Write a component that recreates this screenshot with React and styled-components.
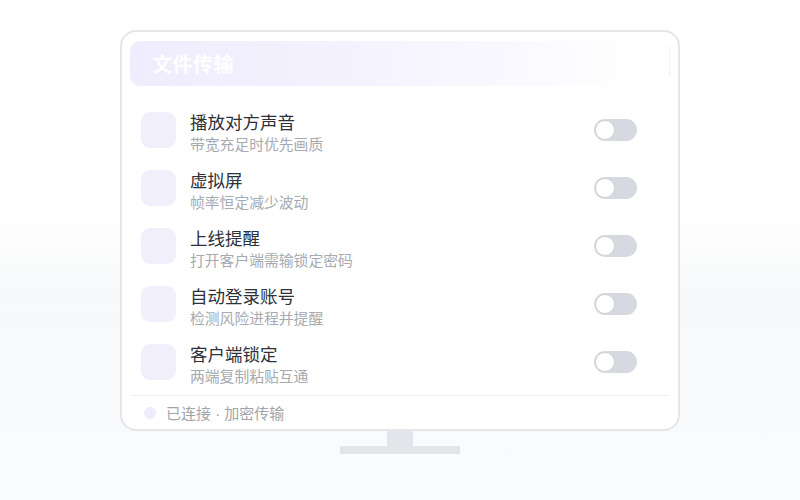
import styled, { createGlobalStyle } from 'styled-components';

const GlobalStyle = createGlobalStyle`
  html, body {
    margin: 0;
    padding: 0;
  }
  body {
    font-family: "Noto Sans CJK SC", "Noto Sans", sans-serif;
    background: linear-gradient(180deg, #ffffff 0%, #ffffff 42%, #f8f9fa 58%, #fafbfc 100%);
    min-height: 500px;
  }
`;

const settings = [
    { title: '播放对方声音', desc: '带宽充足时优先画质' },
    { title: '虚拟屏', desc: '帧率恒定减少波动' },
    { title: '上线提醒', desc: '打开客户端需输锁定密码' },
    { title: '自动登录账号', desc: '检测风险进程并提醒' },
    { title: '客户端锁定', desc: '两端复制粘贴互通' },
];

const Page = styled.div`
  width: 800px;
  height: 500px;
  display: flex;
  flex-direction: column;
  align-items: center;
  padding-top: 30px;
  box-sizing: border-box;
`;

const Screen = styled.div`
  width: 560px;
  height: 401px;
  box-sizing: border-box;
  border: 2px solid #e4e6ea;
  border-radius: 16px;
  background: #ffffff;
  padding: 9px 8px 0;
  display: flex;
  flex-direction: column;
`;

// Barra de título com degradê lilás
const Header = styled.div`
  position: relative;
  height: 45px;
  border-radius: 10px 0 0 10px;
  background: linear-gradient(90deg, #efecfd 0%, #f5f3fe 45%, #fdfcff 85%, #ffffff 100%);
  display: flex;
  align-items: center;
  padding-left: 22px;
  color: #ffffff;
  font-size: 20px;
  font-weight: 700;
  letter-spacing: 0.5px;

  &::after {
    content: '';
    position: absolute;
    right: 0;
    top: 4px;
    bottom: 10px;
    width: 1px;
    background: #f1f2f5;
  }
`;

const List = styled.div`
  margin-top: 15px;
  display: flex;
  flex-direction: column;
`;

const Row = styled.div`
  height: 58px;
  display: flex;
  align-items: center;
  padding: 0 33px 0 10px;
`;

const IconBox = styled.div`
  width: 35px;
  height: 36px;
  margin-left: 1px;
  border-radius: 9px;
  background: #f2effd;
  flex-shrink: 0;
`;

const Texts = styled.div`
  flex: 1;
  margin-left: 14px;
  padding-top: 6px;
  display: flex;
  flex-direction: column;
`;

const Title = styled.div`
  font-size: 17.5px;
  line-height: 22px;
  color: #2d3138;
`;

const Desc = styled.div`
  font-size: 14.8px;
  line-height: 22px;
  color: #a6aab1;
`;

// Interruptor desligado
const Switch = styled.div`
  position: relative;
  width: 43px;
  height: 22px;
  border-radius: 11px;
  background: ${(props) => (props.on ? '#8b7cf6' : '#d6d9df')};
  flex-shrink: 0;

  &::after {
    content: '';
    position: absolute;
    top: 1px;
    left: ${(props) => (props.on ? '22px' : '1px')};
    width: 18px;
    height: 18px;
    border-radius: 50%;
    background: #ffffff;
    border: 1px solid #cfd3da;
  }
`;

const Divider = styled.div`
  height: 1px;
  background: #eef0f3;
  margin-top: 4px;
`;

const Footer = styled.div`
  height: 33px;
  display: flex;
  align-items: center;
  padding-left: 14px;
  gap: 10px;
  font-family: "Liberation Sans", "Noto Sans CJK SC", sans-serif;
  font-size: 15px;
  color: #a0a4ab;
`;

const Dot = styled.span`
  width: 12px;
  height: 12px;
  border-radius: 50%;
  background: #efebfd;
`;

const Neck = styled.div`
  width: 26px;
  height: 15px;
  background: #e2e5e9;
`;

const Base = styled.div`
  width: 120px;
  height: 8px;
  background: #e2e5e9;
`;

export default function App() {
    return (
        <>
            <GlobalStyle />
            <Page>
                <Screen>
                    <Header>文件传输</Header>
                    <List>
                        {settings.map((item) => (
                            <Row key={item.title}>
                                <IconBox />
                                <Texts>
                                    <Title>{item.title}</Title>
                                    <Desc>{item.desc}</Desc>
                                </Texts>
                                <Switch />
                            </Row>
                        ))}
                    </List>
                    <Divider />
                    <Footer>
                        <Dot />
                        已连接 · 加密传输
                    </Footer>
                </Screen>
                <Neck />
                <Base />
            </Page>
        </>
    );
}
